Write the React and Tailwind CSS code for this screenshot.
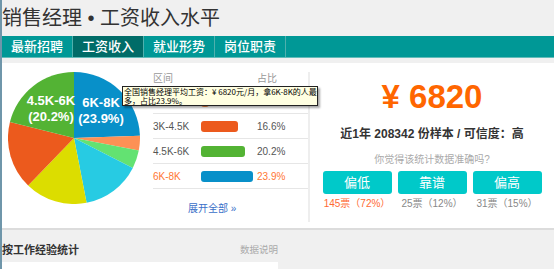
import React from "react";

const slices = [
  { from: 0, to: 88, color: "#0890c9" },
  { from: 88, to: 101, color: "#fd9155" },
  { from: 101, to: 117, color: "#63e272" },
  { from: 117, to: 169, color: "#27cbe3" },
  { from: 169, to: 224, color: "#dcdd00" },
  { from: 224, to: 284, color: "#ec5a1d" },
  { from: 284, to: 360, color: "#53b334" },
];

// first row sits under the tooltip, only its bar peeks out
const rows = [
  { label: "", pct: "", bar: "w-[8px] bg-[#f08a4b]", hot: false },
  { label: "3K-4.5K", pct: "16.6%", bar: "w-[37px] bg-[#ec5a1d]", hot: false },
  { label: "4.5K-6K", pct: "20.2%", bar: "w-[44px] bg-[#53b334]", hot: false },
  { label: "6K-8K", pct: "23.9%", bar: "w-[52px] bg-[#0890c9]", hot: true },
];

const tabs = ["最新招聘", "工资收入", "就业形势", "岗位职责"];

const votes = [
  { label: "偏低", count: "145票（72%）", hot: true },
  { label: "靠谱", count: "25票（12%）", hot: false },
  { label: "偏高", count: "31票（15%）", hot: false },
];

function point(deg, r) {
  const a = ((deg - 90) * Math.PI) / 180;
  return [66 + r * Math.cos(a), 66 + r * Math.sin(a)];
}

function Pie() {
  return (
    <svg width="132" height="132" viewBox="0 0 132 132">
      {slices.map((s) => {
        const [x1, y1] = point(s.from, 66);
        const [x2, y2] = point(s.to, 66);
        const large = s.to - s.from > 180 ? 1 : 0;
        return (
          <path
            key={s.from}
            d={`M66 66 L${x1} ${y1} A66 66 0 ${large} 1 ${x2} ${y2} Z`}
            fill={s.color}
          />
        );
      })}
      <g fill="#fff" fontFamily="Liberation Sans, sans-serif" fontWeight="bold" fontSize="13" textAnchor="middle">
        <text x="93" y="35">6K-8K</text>
        <text x="93" y="51">(23.9%)</text>
        <text x="43" y="33">4.5K-6K</text>
        <text x="43" y="49">(20.2%)</text>
      </g>
    </svg>
  );
}

const App = () => {
  return (
    <div className="min-h-screen bg-[#f0f0f0] border-l-2 border-[#6f96aa] font-['Liberation_Sans','Noto_Sans_CJK_SC',sans-serif] overflow-hidden">
      <div className="h-[36px] flex items-center text-[20px] text-[#333] whitespace-nowrap">
        销售经理 • 工资收入水平
      </div>

      <div className="flex h-[22px] bg-[#009896] border-b border-[#62bcb9]">
        {tabs.map((t, i) => (
          <div
            key={t}
            className={
              i === 1
                ? "w-[71px] flex items-center justify-center text-[13px] text-white font-medium bg-[#006c68] border-r border-[#4fb0ad]"
                : "w-[71px] flex items-center justify-center text-[13px] text-white font-medium border-r border-[#4fb0ad]"
            }
          >
            {t}
          </div>
        ))}
      </div>

      <div className="mt-[5px] bg-white border-b-2 border-[#dcdcdc] h-[167px] flex">
        <div className="w-[151px] shrink-0 pl-[6px] pt-[9px]">
          <Pie />
        </div>

        <div className="relative w-[155px] shrink-0 pt-[6px]">
          <div className="flex h-[20px] items-center text-[10px] leading-[12px] text-[#999] border-b border-[#e6e6e6]">
            <span className="w-[104px]">区间</span>
            <span>占比</span>
          </div>
          {rows.map((r, i) => (
            <div
              key={i}
              className={
                r.hot
                  ? "flex h-[25px] items-center text-[10px] text-[#ff7733] border-b border-[#e6e6e6]"
                  : "flex h-[25px] items-center text-[10px] text-[#555] border-b border-[#e6e6e6]"
              }
            >
              <span className="w-[48px]">{r.label}</span>
              <span className="w-[56px]">
                <span className={`block h-[11px] rounded-[3px] ${r.bar}`} />
              </span>
              <span>{r.pct}</span>
            </div>
          ))}
          <div className="mt-[12px] pl-[35px] text-[10px] text-[#3a6fc8]">展开全部 »</div>

          <div className="absolute left-[-31px] top-[23px] w-[196px] bg-[#ffffe1] border border-[#222] shadow-[2px_2px_2px_rgba(0,0,0,0.35)] px-[1px] text-[8px] leading-[9px] text-black whitespace-nowrap z-10 font-['Noto_Sans_CJK_SC',sans-serif]">
            全国销售经理平均工资：¥ 6820元/月，拿6K-8K的人最
            <br />
            多，占比23.9%。
          </div>
        </div>

        <div className="w-[2px] bg-[#eeeeee] mt-[9px] mb-[6px] shrink-0" />

        <div className="flex-1 flex flex-col items-center pt-[14px]">
          <div className="text-[33px] leading-[40px] font-bold text-[#ff6600]">¥ 6820</div>
          <div className="mt-[8px] text-[12px] font-bold text-[#333]">
            近1年 208342 份样本 / 可信度：高
          </div>
          <div className="mt-[9px] text-[10px] text-[#aaa]">你觉得该统计数据准确吗?</div>
          <div className="mt-[4px] flex gap-[6px]">
            {votes.map((v) => (
              <div key={v.label} className="flex flex-col items-center">
                <div className="w-[69px] h-[23px] rounded-[3px] bg-[#00c9c9] text-white text-[13px] flex items-center justify-center">
                  {v.label}
                </div>
                <div
                  className={
                    v.hot
                      ? "mt-[2px] text-[10px] text-[#ff6a33]"
                      : "mt-[2px] text-[10px] text-[#888]"
                  }
                >
                  {v.count}
                </div>
              </div>
            ))}
          </div>
        </div>
      </div>

      <div className="w-[276px] mt-[8px] h-[24px] flex items-center justify-between">
        <span className="text-[11px] font-bold text-[#333]">按工作经验统计</span>
        <span className="text-[9.5px] text-[#aaa]">数据说明</span>
      </div>
      <div className="w-[276px] h-[20px] bg-white" />
    </div>
  );
};

export default App;
